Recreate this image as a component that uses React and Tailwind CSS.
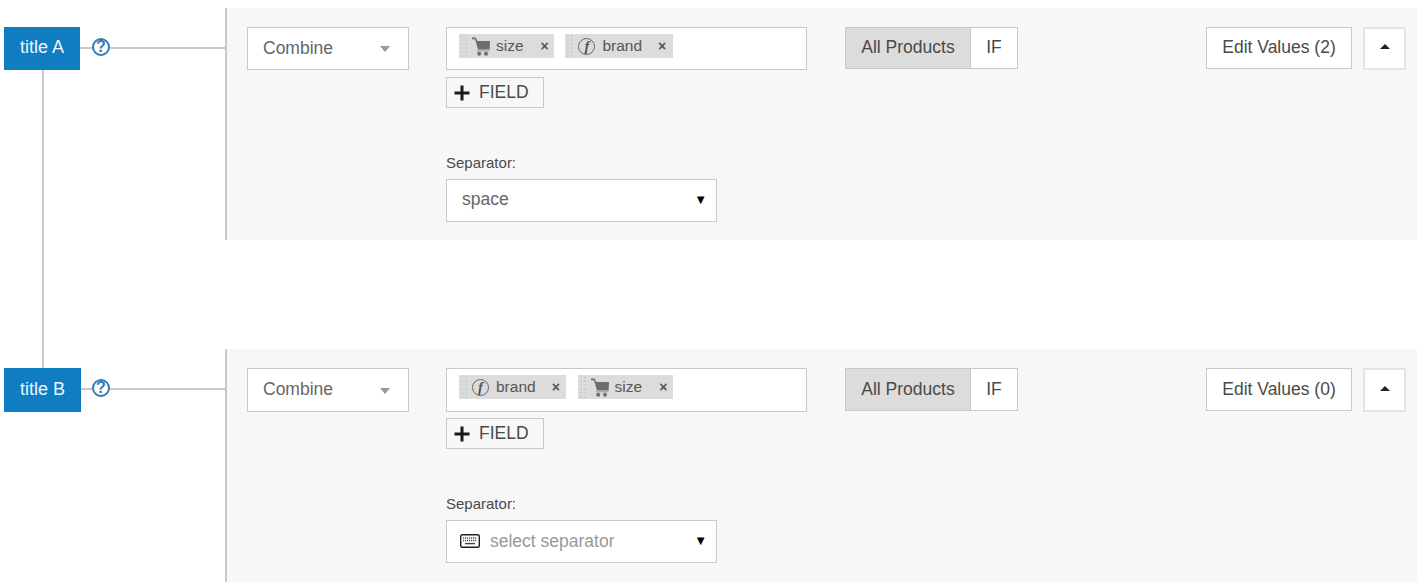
import { useState } from "react";

function Cart() {
  return (
    <svg width="18" height="19" viewBox="0 0 18 19" className="shrink-0">
      <path d="M0 0.5h3.6l1.8 3.5H18l-.4 8.5H6L3 2.3H0z" fill="#6d6d6d" />
      <rect x="5" y="13.3" width="12.5" height="1" fill="#9a9a9a" />
      <circle cx="7.2" cy="16.8" r="2" fill="#6d6d6d" />
      <circle cx="14" cy="16.8" r="2" fill="#6d6d6d" />
    </svg>
  );
}

function Fn() {
  return (
    <span className="w-[17px] h-[17px] shrink-0 rounded-full border border-[#666] flex items-center justify-center font-['Liberation_Serif',serif] italic font-bold text-[15px] leading-none text-[#555]">
      f
    </span>
  );
}

function Grip() {
  return (
    <span className="grid grid-cols-2 gap-[2px] shrink-0 w-[6px] ml-[2px]">
      {Array.from({ length: 12 }).map((_, i) => (
        <span key={i} className="w-[2px] h-[2px] bg-[#cfcfcf]" />
      ))}
    </span>
  );
}

function Chip({ kind, label, width, closeGap }) {
  return (
    <div className={`h-[24px] flex items-center bg-[#dcdcdc] ${width}`}>
      <Grip />
      <span className="ml-[5px] w-[24px] flex items-center">{kind === "cart" ? <Cart /> : <Fn />}</span>
      <span className="text-[15.5px] text-[#555] -mt-[1px]">{label}</span>
      <span className={`text-[14px] font-bold text-[#555] leading-none ${closeGap}`}>×</span>
    </div>
  );
}

function KeyboardIcon() {
  return (
    <svg width="20" height="14" viewBox="0 0 20 14" className="shrink-0 -ml-[2px]">
      <rect x="0.7" y="0.7" width="18.6" height="12.6" rx="1.5" fill="#fff" stroke="#222" strokeWidth="1.4" />
      <path d="M3 4h14M3 6.5h14" stroke="#555" strokeWidth="1.3" strokeDasharray="1.2 0.8" />
      <path d="M5 9.6h10" stroke="#444" strokeWidth="1.4" />
    </svg>
  );
}

function Block({ title, titleWidth, chips, edits, separator, showDown }) {
  return (
    <div className="flex relative">
      {showDown && <div className="absolute left-[42px] top-[60px] h-[300px] w-[2px] bg-[#c9c9c9]" />}
      <div className="w-[225px] shrink-0 pt-[19px] pl-[4px] relative">
        <div className="absolute left-[80px] right-0 top-[39px] h-[2px] bg-[#c9c9c9]" />
        <div className={`relative h-[43.4px] bg-[#0f7dc2] text-[#eef6fb] text-[18px] font-['Liberation_Sans',sans-serif] pb-[2px] flex items-center justify-center ${titleWidth}`}>
          {title}
        </div>
        <div className="absolute left-[92px] top-[30px] w-[18px] h-[18px] rounded-full border-2 border-[#337ab7] bg-white text-[#337ab7] text-[16px] font-bold leading-none flex items-center justify-center">
          ?
        </div>
      </div>
      <section className="flex-1 h-[232.4px] bg-[#f7f7f7] border-l-2 border-[#c9c9c9] pt-[19px] pl-[20px] pr-[11px] flex items-start">
        <div className="w-[162px] h-[43.4px] bg-white border border-[#c9c9c9] flex items-center justify-between pl-[15px] pr-[18px] pb-[2px] text-[#666] text-[17.5px]">
          <span>Combine</span>
          <span className="w-0 h-0 border-x-[5.5px] border-x-transparent border-t-[6px] border-t-[#999] mt-[3px]" />
        </div>
        <div className="ml-[37px] w-[361px]">
          <div className="h-[43.2px] bg-white border border-[#c9c9c9] pl-[12px] pt-[6px] flex gap-[11.2px]">{chips}</div>
          <button className="mt-[6.8px] w-[98px] h-[31px] border border-[#c9c9c9] flex items-center pl-[7px] pb-[1px] text-[#4a4a4a] text-[17.5px]">
            <svg width="16" height="16" viewBox="0 0 16 16" className="shrink-0 mt-[2px]">
              <path d="M8 0.5v15M0.5 8h15" stroke="#1a1a1a" strokeWidth="3" />
            </svg>
            <span className="ml-[9px]">FIELD</span>
          </button>
          <div className="w-[271px] mt-[46px]">
            <div className="text-[15px] leading-[17px] text-[#4a4a4a]">Separator:</div>
            <div className="mt-[8px] h-[43px] bg-white border border-[#c9c9c9] flex items-center pl-[15px] pr-[11px] pb-[2px] text-[17.5px]">
              {separator ? (
                <span className="text-[#666]">{separator}</span>
              ) : (
                <>
                  <KeyboardIcon />
                  <span className="ml-[10px] text-[#999]">select separator</span>
                </>
              )}
              <span className="ml-auto -mr-[2px] text-[13px] text-black">▼</span>
            </div>
          </div>
        </div>
        <div className="ml-[38px] flex text-[17.5px] text-[#4a4a4a]">
          <div className="w-[126px] h-[42.4px] bg-[#dcdcdc] border border-[#c9c9c9] pb-[1.2px] flex items-center justify-center">All Products</div>
          <div className="w-[47px] h-[42.4px] bg-white border border-l-0 border-[#c9c9c9] pb-[1.2px] flex items-center justify-center">IF</div>
        </div>
        <div className="ml-auto flex gap-[11px]">
          <div className="w-[146px] h-[42.4px] bg-white border border-[#c9c9c9] pb-[1.2px] flex items-center justify-center text-[17.5px] text-[#4a4a4a]">Edit Values ({edits})</div>
          <div className="w-[43px] h-[43.4px] bg-white border-2 border-[#e4e4e4] flex items-center justify-center">
            <span className="w-0 h-0 border-x-[5px] border-x-transparent border-b-[5px] border-b-[#222] mb-[4px]" />
          </div>
        </div>
      </section>
    </div>
  );
}

export default function App() {
  const [rows] = useState([
    {
      title: "title A",
      titleWidth: "w-[76px]",
      edits: 2,
      separator: "space",
      showDown: true,
      chips: (
        <>
          <Chip kind="cart" label="size" width="w-[95.2px]" closeGap="ml-[17px]" />
          <Chip kind="fn" label="brand" width="w-[107.4px]" closeGap="ml-[16px]" />
        </>
      ),
    },
    {
      title: "title B",
      titleWidth: "w-[77px]",
      edits: 0,
      separator: null,
      showDown: false,
      chips: (
        <>
          <Chip kind="fn" label="brand" width="w-[107.4px]" closeGap="ml-[16px]" />
          <Chip kind="cart" label="size" width="w-[95.2px]" closeGap="ml-[17px]" />
        </>
      ),
    },
  ]);

  return (
    <div className="w-[1417px] h-[588px] overflow-hidden bg-white pt-[8px] flex flex-col gap-[109px] font-['Liberation_Sans',Arial,sans-serif]">
      {rows.map((r) => (
        <Block key={r.title} {...r} />
      ))}
    </div>
  );
}
